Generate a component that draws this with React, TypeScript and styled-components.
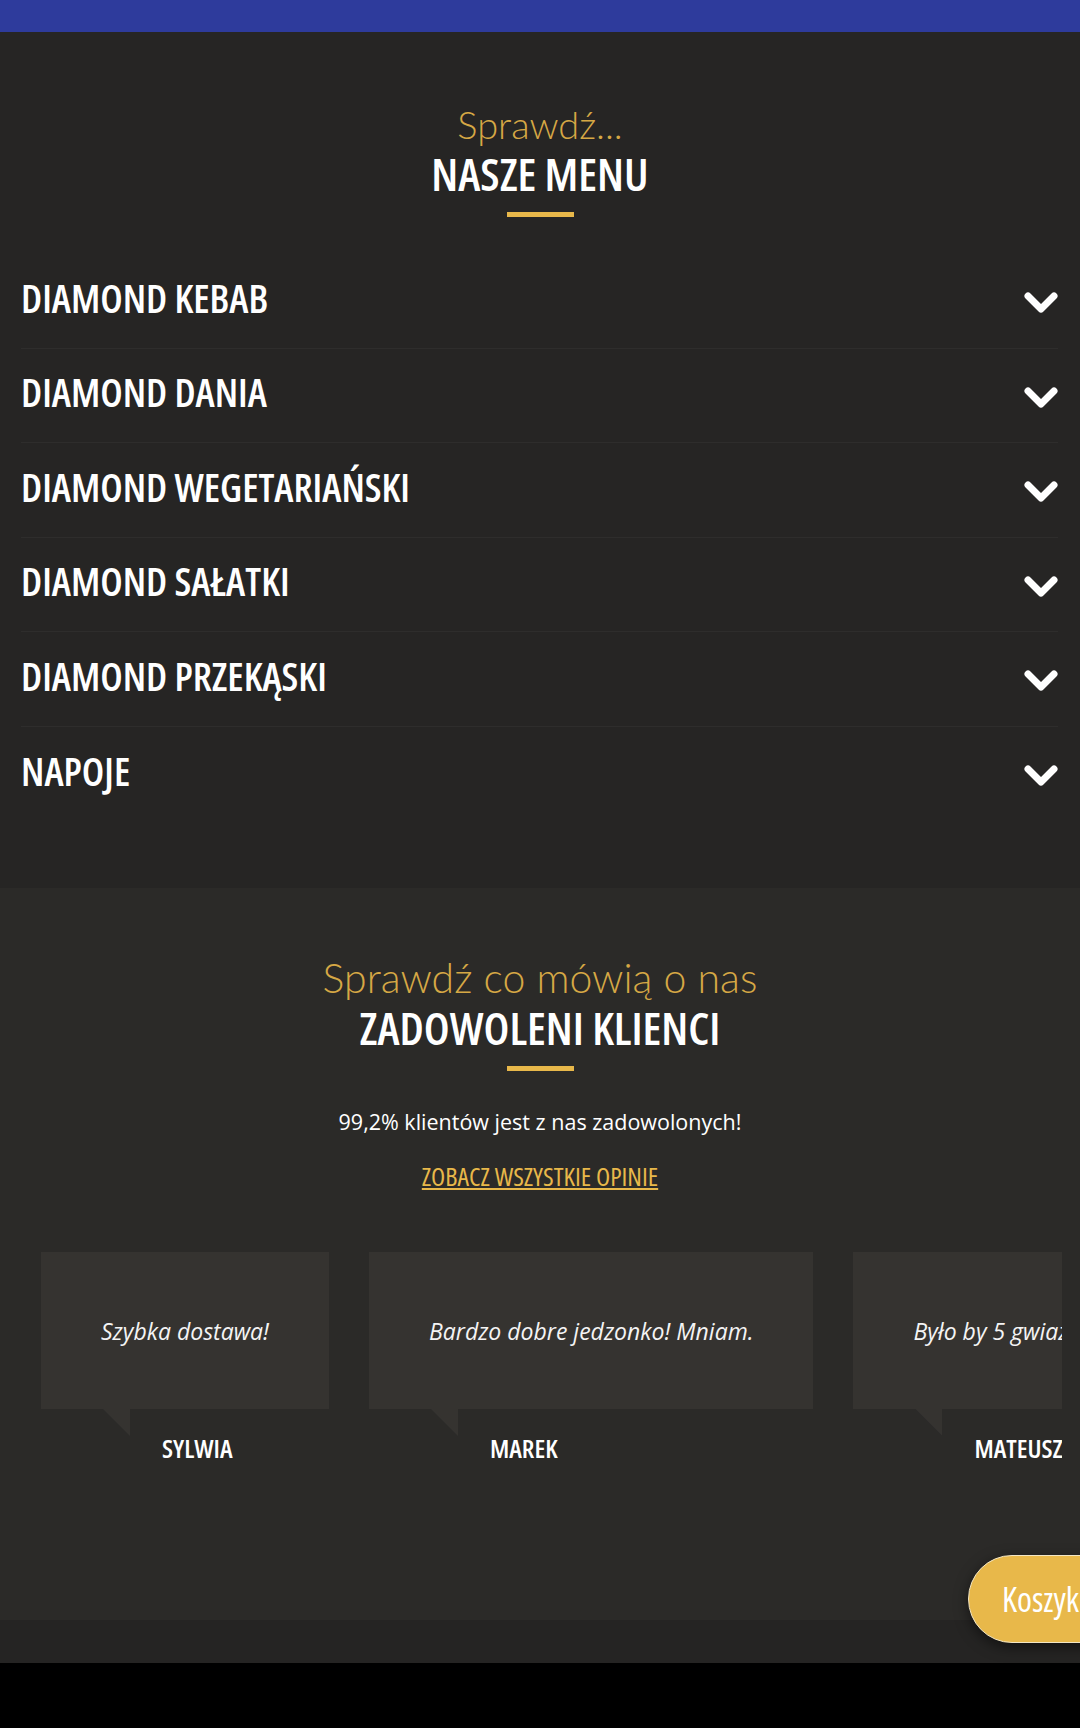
import React from 'react'
import styled, { createGlobalStyle } from 'styled-components'

const GlobalStyle = createGlobalStyle`
  html, body {
    margin: 0;
    padding: 0;
    background: #000000;
  }
  * {
    box-sizing: border-box;
  }
`

const condensed = `"Open Sans", sans-serif`
const thin = `Lato, "Noto Sans", sans-serif`

const Page = styled.div`
  position: relative;
  width: 1080px;
  height: 1728px;
  overflow: hidden;
  background: #000000;
`

const TopBar = styled.div`
  height: 32px;
  background: #2e3b9c;
`

const MenuSection = styled.section`
  height: 856px;
  background: #262524;
  padding-top: 68px;
`

const ReviewsSection = styled.section`
  height: 732px;
  background: #2b2a28;
  padding-top: 66px;
`

const FooterStrip = styled.div`
  height: 43px;
  background: #252423;
`

const Heading = styled.div`
  display: flex;
  flex-direction: column;
  align-items: center;
`

const Kicker = styled.div<{ $size: number }>`
  font-family: ${thin};
  font-weight: 300;
  font-size: ${(p) => p.$size}px;
  line-height: 48px;
  color: #d6a845;
`

const Title = styled.h2`
  margin: 0;
  font-family: ${condensed};
  font-stretch: 75%;
  font-weight: 600;
  font-size: 45.5px;
  line-height: 50px;
  color: #ffffff;
`

const Bar = styled.div`
  width: 67px;
  height: 5px;
  margin-top: 14px;
  background: #e8b84a;
`

const MenuList = styled.ul`
  list-style: none;
  margin: 37px 22px 0 21px;
  padding: 0;
`

const MenuRow = styled.li`
  display: flex;
  align-items: center;
  justify-content: space-between;
  height: 94.5px;
  border-bottom: 1px solid #2e2d2c;
  &:last-child {
    border-bottom: none;
  }
`

const RowLabel = styled.span`
  margin-bottom: 6px;
  font-family: ${condensed};
  font-stretch: 75%;
  font-weight: 600;
  font-size: 39.5px;
  color: #ffffff;
`

const ChevronBox = styled.span`
  display: flex;
  margin-top: 6px;
`

const Chevron = () => (
  <ChevronBox>
    <svg width="34" height="23" viewBox="0 0 34 23">
      <polyline
        points="4,4 17,17 30,4"
        fill="none"
        stroke="#ffffff"
        strokeWidth="7"
        strokeLinecap="round"
        strokeLinejoin="round"
      />
    </svg>
  </ChevronBox>
)

const Stat = styled.p`
  margin: 36px 0 0;
  text-align: center;
  font-family: "Open Sans", sans-serif;
  font-size: 21.5px;
  color: #ffffff;
`

const AllLink = styled.a`
  display: block;
  margin-top: 22px;
  text-align: center;
  font-family: ${condensed};
  font-stretch: 75%;
  font-size: 26px;
  color: #e8b84a;
  text-decoration: underline;
`

const Carousel = styled.div`
  display: flex;
  gap: 40px;
  margin: 58px 18px 0 41px;
  overflow: hidden;
`

const Slide = styled.div`
  flex: none;
  display: flex;
  flex-direction: column;
`

const Bubble = styled.div`
  position: relative;
  height: 157px;
  padding: 0 60px;
  display: flex;
  align-items: center;
  background: #353330;
  font-family: "Open Sans", sans-serif;
  font-style: italic;
  font-size: 23px;
  color: #f4f4f4;
  white-space: nowrap;
  &::after {
    content: '';
    position: absolute;
    left: 62px;
    top: 100%;
    width: 27px;
    height: 27px;
    background: #353330;
    clip-path: polygon(0 0, 100% 0, 100% 100%);
  }
`

const Author = styled.div`
  padding-left: 121px;
  margin-top: 21px;
  font-family: ${condensed};
  font-stretch: 75%;
  font-weight: 600;
  font-size: 26px;
  color: #ffffff;
`

const CartButton = styled.button`
  position: absolute;
  left: 968px;
  top: 1555px;
  width: 220px;
  height: 88px;
  padding: 0 0 0 33px;
  text-align: left;
  border: 1.5px solid #f3e6c4;
  border-radius: 44px;
  background: #e8b84a;
  box-shadow: 0 4px 14px rgba(0, 0, 0, 0.5);
  font-family: ${condensed};
  font-stretch: 75%;
  font-weight: 500;
  font-size: 34px;
  color: #ffffff;
`

const menuItems = [
  'DIAMOND KEBAB',
  'DIAMOND DANIA',
  'DIAMOND WEGETARIAŃSKI',
  'DIAMOND SAŁATKI',
  'DIAMOND PRZEKĄSKI',
  'NAPOJE',
]

const reviews = [
  { text: 'Szybka dostawa!', name: 'SYLWIA' },
  { text: 'Bardzo dobre jedzonko! Mniam.', name: 'MAREK' },
  { text: 'Było by 5 gwiazdek, gdyby nie czas dostawy.', name: 'MATEUSZ' },
]

const App = () => {
  return (
    <Page>
      <GlobalStyle />
      <TopBar />
      <MenuSection>
        <Heading>
          <Kicker $size={38}>Sprawdź...</Kicker>
          <Title>NASZE MENU</Title>
          <Bar />
        </Heading>
        <MenuList>
          {menuItems.map((item) => (
            <MenuRow key={item}>
              <RowLabel>{item}</RowLabel>
              <Chevron />
            </MenuRow>
          ))}
        </MenuList>
      </MenuSection>
      <ReviewsSection>
        <Heading>
          <Kicker $size={41}>Sprawdź co mówią o nas</Kicker>
          <Title>ZADOWOLENI KLIENCI</Title>
          <Bar />
        </Heading>
        <Stat>99,2% klientów jest z nas zadowolonych!</Stat>
        <AllLink href="#">ZOBACZ WSZYSTKIE OPINIE</AllLink>
        <Carousel>
          {reviews.map((r) => (
            <Slide key={r.name}>
              <Bubble>{r.text}</Bubble>
              <Author>{r.name}</Author>
            </Slide>
          ))}
        </Carousel>
      </ReviewsSection>
      <FooterStrip />
      <CartButton>Koszyk</CartButton>
    </Page>
  )
}

export default App
